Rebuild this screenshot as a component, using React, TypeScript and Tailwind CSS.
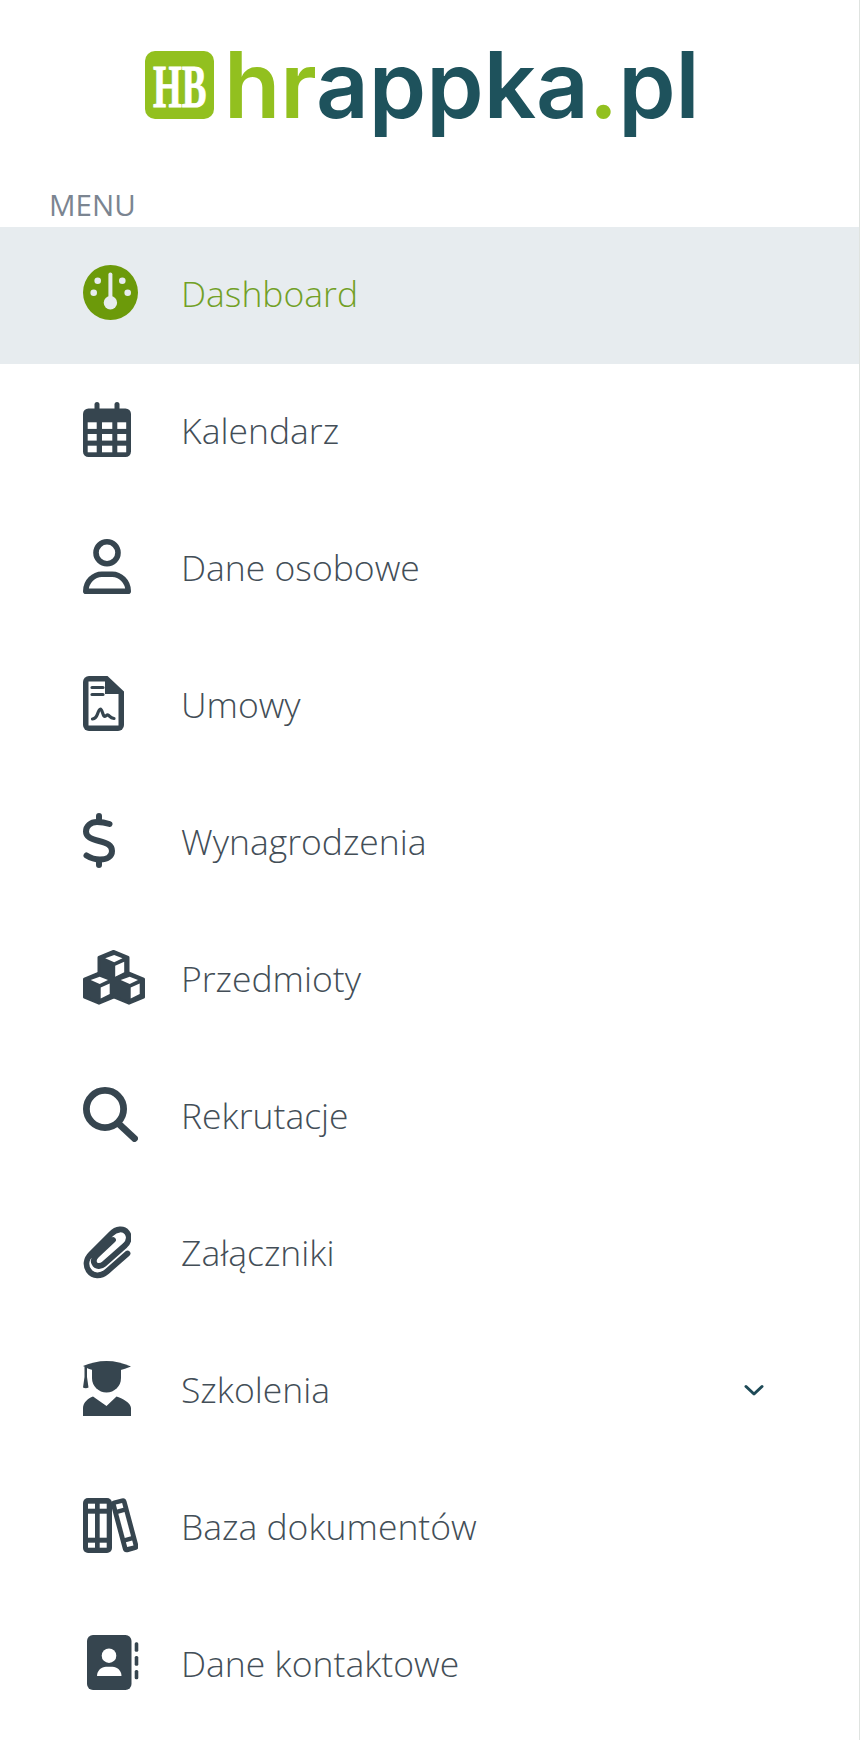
import type { ReactNode } from "react"

const DARK = "#36454f"

function LogoMark() {
  return (
    <svg width="69" height="68" viewBox="0 0 69 68" className="block shrink-0">
      <rect x="0" y="0" width="69" height="68" rx="10" fill="#92c01f" />
      <text
        transform="translate(8 56) scale(0.77 1.29)"
        fontFamily="'Liberation Serif', serif"
        fontWeight="700"
        fontSize="48"
        fill="#ffffff"
        stroke="#ffffff"
        strokeWidth="0.8"
      >
        HB
      </text>
    </svg>
  )
}

function Logo() {
  return (
    <div className="flex items-start gap-[10px]">
      <LogoMark />
      <span className="-mt-[12px] font-['Inter',sans-serif] text-[92px] leading-[92px] font-semibold whitespace-nowrap text-[#1e525c]">
        <span className="text-[#92c01f]">hr</span>appka<span className="text-[#92c01f]">.</span>pl
      </span>
    </div>
  )
}

function GaugeIcon() {
  return (
    <svg width="55" height="55" viewBox="0 0 55 55">
      <circle cx="27.5" cy="27.5" r="27.5" fill="#6c9a0a" />
      <g fill="#e7ecef">
        <circle cx="14.7" cy="15.7" r="3.3" />
        <circle cx="39.3" cy="15.7" r="3.3" />
        <circle cx="10.7" cy="27.7" r="3.3" />
        <circle cx="44.7" cy="27.7" r="3.3" />
        <circle cx="27.4" cy="37.7" r="6.7" />
        <rect x="25.4" y="7.5" width="4" height="30" rx="2" />
      </g>
    </svg>
  )
}

function CalendarIcon() {
  const xs = [4.7, 19, 34.3]
  const ws = [9, 10.3, 8.9]
  const ys = [20.3, 32, 43.7]
  return (
    <svg width="48" height="55" viewBox="0 0 48 55">
      <rect x="11.5" y="0" width="5" height="10" rx="2.5" fill={DARK} />
      <rect x="31.5" y="0" width="5" height="10" rx="2.5" fill={DARK} />
      <rect x="0" y="6.5" width="48" height="48.5" rx="5.5" fill={DARK} />
      {ys.map((y) =>
        xs.map((x, i) => <rect key={`${x}-${y}`} x={x} y={y} width={ws[i]} height="6.6" fill="#ffffff" />),
      )}
    </svg>
  )
}

function PersonIcon() {
  return (
    <svg width="48" height="55" viewBox="0 0 48 55" fill="none" stroke={DARK} strokeWidth="5.6">
      <circle cx="24" cy="13.8" r="11" />
      <path strokeLinejoin="round" d="M2.800 52.200h42.400c0-10-8-17-16-17h-10.400c-8 0-16 7-16 17z" />
    </svg>
  )
}

function ContractIcon() {
  return (
    <svg width="41" height="55" viewBox="0 0 41 55">
      <path fill={DARK} d="M6 0h18.500l16.500 15.500V49a6 6 0 0 1-6 6H6a6 6 0 0 1-6-6V6a6 6 0 0 1 6-6z" />
      <path fill="#ffffff" d="M5.500 5.500h16.500v12.500h13.500V49.500H5.500z" />
      <g fill="none" stroke={DARK} strokeWidth="3.200" strokeLinecap="round" strokeLinejoin="round">
        <path d="M9 11.500h11M9 18.500h11" />
        <path d="M9.500 43c3-.500 4-2 5-5 .800-2.500 2-5 3-5 1.500 0 2 5 3.500 7 1.200 1.500 2.500-1.500 4-1 1.500.500 2 3 6 3.500" />
      </g>
    </svg>
  )
}

function DollarIcon() {
  return (
    <svg width="32" height="55" viewBox="0 0 32 55" fill="none" stroke={DARK} strokeWidth="6" strokeLinecap="round">
      <path d="M26.500 11C22 9.500 18 9 14 9 7.500 9 3 13 3 18.500 3 24 8 26 16 28c8 2 13 4 13 10 0 5.500-5 8.500-12 8.500-5 0-9.500-1.500-13.500-4" />
      <path d="M16 3V8M16 47v5" />
    </svg>
  )
}

function Cube({ x, y }: { x: number; y: number }) {
  return (
    <g transform={`translate(${x} ${y})`}>
      <path
        d="M16 1.500 30.500 7.500V25.500L16 31.500 1.500 25.500V7.500z"
        fill={DARK}
        stroke={DARK}
        strokeWidth="3"
        strokeLinejoin="round"
      />
      <path d="M7.700 8.300 16.700 5 25 8.300 16.700 12.300z" fill="#ffffff" />
      <path d="M17.700 15.700 26.700 11.700V22.300L17.700 26.700z" fill="#ffffff" />
    </g>
  )
}

function CubesIcon() {
  return (
    <svg width="62" height="55" viewBox="0 0 62 55">
      <Cube x={14.500} y={0} />
      <Cube x={0} y={21.700} />
      <Cube x={30} y={21.700} />
    </svg>
  )
}

function SearchIcon() {
  return (
    <svg width="55" height="55" viewBox="0 0 55 55" fill="none" stroke={DARK} strokeWidth="6.800" strokeLinecap="round">
      <circle cx="22" cy="22" r="18.600" />
      <path d="M36.500 37.500 51.500 51.500" />
    </svg>
  )
}

function ClipIcon() {
  return (
    <svg width="48" height="55" viewBox="0 0 48 55" fill="none" stroke={DARK} strokeWidth="5.800" strokeLinecap="round" strokeLinejoin="round">
      <path d="M44.500 29.500 24 47.500c-6.500 5.500-14 5-18-.500-4-5.500-3-12 2-17L28 10c5.500-5.500 12.500-6 16-1.500 3 4 2 9-2 13L21 40c-3.500 3-8 2.500-9.500-.500-1.500-2.500-.500-5.500 2-8L30 16" />
    </svg>
  )
}

function GradIcon() {
  return (
    <svg width="48" height="55" viewBox="0 0 48 55" fill={DARK}>
      <path d="M0 5C7 2 15 0 23.500 0 32 0 40 2 48 5.500 40 9 32 11 23.500 11 15 11 7 9 0 5z" />
      <path d="M9 8h29v9a14.500 14.500 0 0 1-29 0z" />
      <path d="M1.500 6h2.500v10l1.500 10.500c-1.500 1-4 1-5.500 0L1.500 16z" />
      <path d="M0 55V47c0-5 5-10 10-11.500L23.500 45 33.500 35.500C39 37 48 42 48 47v8z" />
    </svg>
  )
}

function BooksIcon() {
  const xs = [5, 16.700]
  return (
    <svg width="55" height="55" viewBox="0 0 55 55">
      <rect x="0" y="0" width="29" height="55" rx="5" fill={DARK} />
      {xs.map((x) => (
        <g key={x} fill="#ffffff">
          <rect x={x} y="5.700" width="7" height="5" />
          <rect x={x} y="15.700" width="7" height="24" />
          <rect x={x} y="44.700" width="7" height="5" />
        </g>
      ))}
      <g transform="rotate(-15 41.700 27.300)">
        <rect x="33.700" y="0.500" width="16" height="53.500" rx="4" fill={DARK} />
        <g fill="#ffffff">
          <rect x="38.500" y="5" width="6.500" height="5" />
          <rect x="38.500" y="14.500" width="6.500" height="25" />
          <rect x="38.500" y="44" width="6.500" height="5" />
        </g>
      </g>
    </svg>
  )
}

function AddressIcon() {
  return (
    <svg width="56" height="55" viewBox="-4 0 56 55">
      <rect x="0" y="0" width="44.500" height="55" rx="6" fill={DARK} />
      <rect x="47.700" y="7.300" width="3.600" height="9.400" rx="1.500" fill={DARK} />
      <rect x="47.700" y="21" width="3.600" height="9.700" rx="1.500" fill={DARK} />
      <rect x="47.700" y="35" width="3.600" height="9.300" rx="1.500" fill={DARK} />
      <circle cx="22" cy="20.700" r="7.300" fill="#ffffff" />
      <path d="M10 41c0-5.500 4.500-9.300 9-9.300h6.500c4.500 0 9 3.800 9 9.300z" fill="#ffffff" />
    </svg>
  )
}

function Chevron() {
  return (
    <svg width="20" height="13" viewBox="0 0 20 13" fill="none" stroke="#1e4a57" strokeWidth="3" strokeLinecap="round" strokeLinejoin="round">
      <path d="M2 2.500 10 10l8-7.500" />
    </svg>
  )
}

const ITEMS: { label: string; icon: ReactNode; active?: boolean; chevron?: boolean }[] = [
  { label: "Dashboard", icon: <GaugeIcon />, active: true },
  { label: "Kalendarz", icon: <CalendarIcon /> },
  { label: "Dane osobowe", icon: <PersonIcon /> },
  { label: "Umowy", icon: <ContractIcon /> },
  { label: "Wynagrodzenia", icon: <DollarIcon /> },
  { label: "Przedmioty", icon: <CubesIcon /> },
  { label: "Rekrutacje", icon: <SearchIcon /> },
  { label: "Załączniki", icon: <ClipIcon /> },
  { label: "Szkolenia", icon: <GradIcon />, chevron: true },
  { label: "Baza dokumentów", icon: <BooksIcon /> },
  { label: "Dane kontaktowe", icon: <AddressIcon /> },
]

export default function App() {
  return (
    <div className="h-[1740px] overflow-hidden border-r border-[#dfe3e0] bg-white font-['Open_Sans',sans-serif]">
      {/* logo */}
      <div className="flex h-[182px] pt-[51px] pl-[145px]">
        <Logo />
      </div>
      <p className="h-[45px] pl-[49px] text-[29.5px] leading-[45px] text-[#7b8591]">MENU</p>

      {/* menu */}
      <nav>
        {ITEMS.map((item) => (
          <div
            key={item.label}
            className={`flex h-[137px] items-center pl-[83px] ${item.active ? "bg-[#e7ecef]" : ""}`}
          >
            <span className="mb-[6px] flex w-[99px] shrink-0 items-center">{item.icon}</span>
            <span
              className={`-ml-[1px] mb-[3px] flex-1 text-[35.5px] font-light ${item.active ? "text-[#72a026]" : "text-[#434e57]"}`}
            >
              {item.label}
            </span>
            {item.chevron && (
              <span className="mr-[95px] mb-[2px] flex">
                <Chevron />
              </span>
            )}
          </div>
        ))}
      </nav>
    </div>
  )
}
